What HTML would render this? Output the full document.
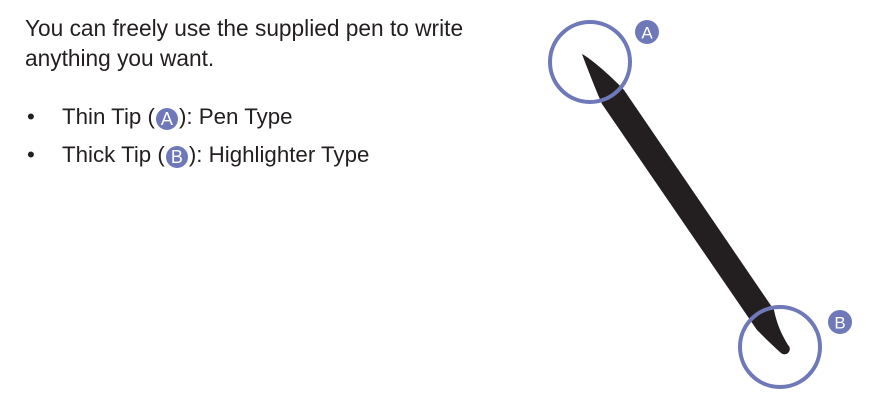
<!DOCTYPE html>
<html><head><style>
body{margin:0;width:885px;height:406px;background:#fff;position:relative;overflow:hidden;font-family:"Liberation Sans",sans-serif;color:#231f20}
.t{position:absolute;left:25px;top:13px;font-size:22.7px;line-height:30px;letter-spacing:0}
.b{position:absolute;left:27px;font-size:22.3px;line-height:26px}
.c{display:inline-block;width:22px;height:22px;border-radius:50%;background:#6f78b8;color:#fff;text-align:center;line-height:22px;font-size:18px;vertical-align:-1px;margin:0 1px}
</style></head><body>
<div class="t">You can freely use the supplied pen to write<br>anything you want.</div>
<div class="b" style="top:104px">•<span style="position:absolute;left:35px;white-space:nowrap">Thin Tip (<span class="c">A</span>): Pen Type</span></div>
<div class="b" style="top:142px">•<span style="position:absolute;left:35px;white-space:nowrap">Thick Tip (<span class="c">B</span>): Highlighter Type</span></div>
<svg width="885" height="406" style="position:absolute;left:0;top:0">
<path d="M582,54 C590,58 610,75 624,90 L774,310 C777,325 782,335 788,345 A5 5 0 0 1 781,353 C772,345 765,338 757,330 L602,104 C595,88 588,70 582,54 Z" fill="#231f20"/>
<circle cx="590" cy="62" r="40" fill="none" stroke="#6f78b8" stroke-width="4"/>
<circle cx="780" cy="347" r="40" fill="none" stroke="#6f78b8" stroke-width="4"/>
<circle cx="647" cy="32" r="12" fill="#6f78b8"/>
<text x="647" y="38.5" font-size="17" fill="#fff" text-anchor="middle" font-family="Liberation Sans">A</text>
<circle cx="840" cy="322" r="12" fill="#6f78b8"/>
<text x="840" y="328.5" font-size="17" fill="#fff" text-anchor="middle" font-family="Liberation Sans">B</text>
</svg>
</body></html>
